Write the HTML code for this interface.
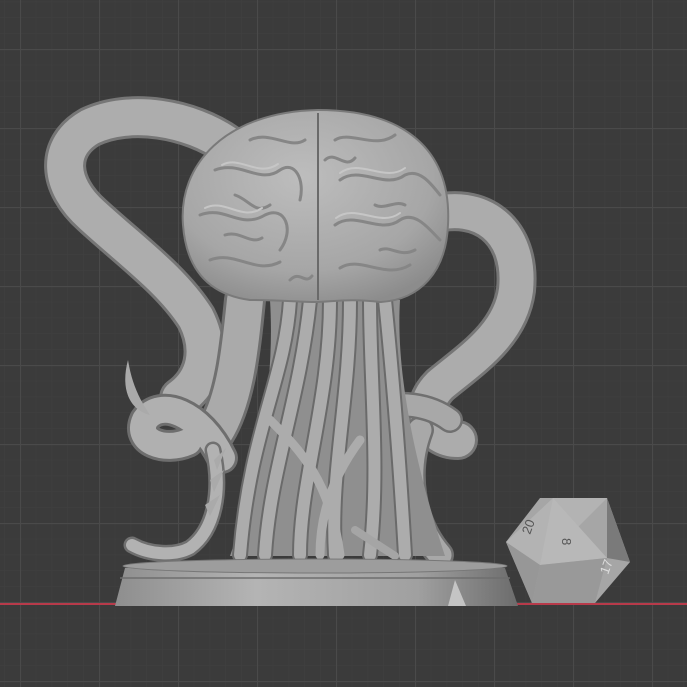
<!DOCTYPE html>
<html><head><meta charset="utf-8"><style>
html,body{margin:0;padding:0;background:#3b3b3b;}
svg{display:block}
</style></head><body>
<svg width="687" height="687" viewBox="0 0 687 687" xmlns="http://www.w3.org/2000/svg">
<defs>
<pattern id="minor" width="15.8" height="15.8" patternUnits="userSpaceOnUse" x="20" y="49">
<path d="M0 0H15.8M0 0V15.8" stroke="#404040" stroke-width="1" fill="none"/>
</pattern>
<pattern id="major" width="79" height="79" patternUnits="userSpaceOnUse" x="20" y="49">
<path d="M0 0.5H79M0.5 0V79" stroke="#4a4a4a" stroke-width="1.2" fill="none"/>
</pattern>
<radialGradient id="brain" cx="0.45" cy="0.35" r="0.7">
<stop offset="0" stop-color="#bdbdbd"/><stop offset="0.7" stop-color="#a6a6a6"/><stop offset="1" stop-color="#8c8c8c"/>
</radialGradient>
<linearGradient id="base" x1="0" x2="1">
<stop offset="0" stop-color="#8e8e8e"/><stop offset="0.35" stop-color="#b4b4b4"/><stop offset="0.75" stop-color="#a0a0a0"/><stop offset="1" stop-color="#6c6c6c"/>
</linearGradient>
</defs>
<rect width="687" height="687" fill="#3b3b3b"/>
<rect width="687" height="687" fill="url(#minor)"/>
<rect width="687" height="687" fill="url(#major)"/>
<line x1="0" y1="604" x2="687" y2="604" stroke="#b83a4a" stroke-width="2"/>

<g fill="none" stroke-linecap="round" stroke-linejoin="round">
<!-- big left loop -->
<path d="M228 145 C190 118 130 108 90 127 C55 147 58 185 92 215 C130 250 172 280 196 318 C212 350 205 380 180 398" stroke="#767676" stroke-width="42"/>
<path d="M228 145 C190 118 130 108 90 127 C55 147 58 185 92 215 C130 250 172 280 196 318 C212 350 205 380 180 398" stroke="#adadad" stroke-width="36"/>
<!-- right tentacle -->
<path d="M430 215 C480 200 522 230 516 290 C510 335 470 360 440 385 C415 410 430 440 458 440" stroke="#767676" stroke-width="40"/>
<path d="M430 215 C480 200 522 230 516 290 C510 335 470 360 440 385 C415 410 430 440 458 440" stroke="#acacac" stroke-width="34"/>
<path d="M420 430 C405 470 410 520 440 555" stroke="#707070" stroke-width="28"/>
<path d="M420 430 C405 470 410 520 440 555" stroke="#a8a8a8" stroke-width="23"/>
<!-- connector horizontal tentacle under right -->
<path d="M370 410 C400 400 430 405 450 420" stroke="#707070" stroke-width="26"/>
<path d="M370 410 C400 400 430 405 450 420" stroke="#a8a8a8" stroke-width="21"/>
<!-- mid-left tentacle -->
<path d="M245 300 C240 350 235 400 215 432" stroke="#707070" stroke-width="42"/>
<path d="M245 300 C240 350 235 400 215 432" stroke="#aaa" stroke-width="36"/>
<!-- tendril mass -->
<path d="M270 300 L400 300 C395 380 420 480 445 556 L230 556 C260 470 275 380 270 300Z" fill="#8f8f8f" stroke="none"/>
<!-- curl with spikes -->
<path d="M222 458 C200 412 160 398 145 420 C135 442 165 452 188 442" stroke="#6e6e6e" stroke-width="32"/>
<path d="M222 458 C200 412 160 398 145 420 C135 442 165 452 188 442" stroke="#b0b0b0" stroke-width="26"/>
<path d="M213 450 C222 490 215 530 190 548 C175 556 150 555 132 545" stroke="#707070" stroke-width="17"/>
<path d="M213 450 C222 490 215 530 190 548 C175 556 150 555 132 545" stroke="#b2b2b2" stroke-width="12"/>
<!-- tendrils -->
<g stroke="#6a6a6a" stroke-width="16">
<path d="M290 300 C285 380 250 430 240 555"/>
<path d="M310 300 C300 400 270 470 265 555"/>
<path d="M330 300 C330 400 300 480 300 555"/>
<path d="M350 300 C350 400 330 470 335 555"/>
<path d="M370 300 C370 380 380 470 370 555"/>
<path d="M385 300 C395 400 400 470 405 555"/>
</g>
<g stroke="#acacac" stroke-width="12">
<path d="M290 300 C285 380 250 430 240 555"/>
<path d="M310 300 C300 400 270 470 265 555"/>
<path d="M330 300 C330 400 300 480 300 555"/>
<path d="M350 300 C350 400 330 470 335 555"/>
<path d="M370 300 C370 380 380 470 370 555"/>
<path d="M385 300 C395 400 400 470 405 555"/>
<path d="M270 420 C300 450 330 480 340 555" stroke-width="9"/>
<path d="M360 440 C330 480 320 520 320 555" stroke-width="9"/>
</g>
<path d="M355 530 L395 556" stroke="#a5a5a5" stroke-width="8"/>
</g>
<!-- spike horn -->
<path d="M128 360 C120 390 130 410 150 415 C140 400 132 385 128 360Z" fill="#aaa"/>
<path d="M205 505 L220 495 L210 516Z M210 480 L224 470 L214 492Z M214 460 L226 448 L217 470Z" fill="#aaa"/>

<!-- brain -->
<path d="M183 225 C178 165 225 112 318 110 C405 110 452 150 448 225 C446 272 420 300 380 302 C350 298 330 302 316 302 C300 302 280 300 250 300 C205 294 186 265 183 225Z" fill="url(#brain)" stroke="#7a7a7a" stroke-width="2"/>
<path d="M318 113 L318 300" stroke="#6a6a6a" stroke-width="2"/>
<g fill="none" stroke="#868686" stroke-width="3" stroke-linecap="round">
<path d="M215 170 C240 160 260 185 280 170 C295 160 305 180 300 200"/>
<path d="M200 215 C225 205 240 230 265 215 C285 205 295 230 280 250"/>
<path d="M210 260 C235 250 255 275 280 262"/>
<path d="M250 140 C270 130 290 150 305 140"/>
<path d="M335 140 C350 130 375 150 395 135"/>
<path d="M340 180 C360 165 385 190 405 175 C420 168 432 185 440 195"/>
<path d="M335 225 C355 210 380 235 400 220 C415 210 430 230 440 240"/>
<path d="M340 268 C360 255 385 280 410 265"/>
<path d="M235 195 C250 200 255 215 270 205"/>
<path d="M375 205 C385 210 395 200 405 205"/>
<path d="M225 235 C240 230 250 245 262 238"/>
<path d="M290 280 C300 270 305 285 312 276"/>
<path d="M325 160 C335 150 345 170 355 158"/>
<path d="M380 250 C390 245 400 258 415 250"/>
</g>
<g fill="none" stroke="#c6c6c6" stroke-width="2" stroke-linecap="round">
<path d="M222 165 C240 155 258 178 278 164"/>
<path d="M205 208 C225 198 242 222 262 208"/>
<path d="M340 173 C360 158 385 183 405 168"/>
<path d="M336 218 C356 203 380 228 400 213"/>
</g>

<!-- base -->
<path d="M125 568 L505 568 L518 606 L115 606Z" fill="url(#base)"/>
<ellipse cx="315" cy="566" rx="192" ry="7" fill="#9d9d9d" stroke="#777" stroke-width="1"/>
<line x1="120" y1="578" x2="510" y2="578" stroke="#6e6e6e" stroke-width="1.5"/>
<path d="M448 606 L455 580 L466 606Z" fill="#c4c4c4"/>

<!-- d20 -->
<path d="M540 498 L607 498 L630 562 L595 603 L532 603 L506 542Z" fill="#a6a6a6"/>
<path d="M506 542 L553 498 L607 498 L540 565 Z" fill="#b3b3b3"/>
<path d="M553 498 L607 558 L540 565Z" fill="#b8b8b8"/>
<path d="M540 565 L607 558 L595 603 L532 603Z" fill="#999"/>
<path d="M607 498 L630 562 L607 558Z" fill="#7a7a7a"/>
<path d="M506 542 L540 565 L532 603Z" fill="#979797"/>
<g font-family="Liberation Sans, sans-serif" font-size="13" fill="#555">
<text x="530" y="535" transform="rotate(-70 530 535)">20</text>
<text x="562" y="538" transform="rotate(90 562 538)">8</text>
<text x="608" y="575" fill="#ddd" transform="rotate(-70 608 575)">17</text>
</g>
</svg>
</body></html>
